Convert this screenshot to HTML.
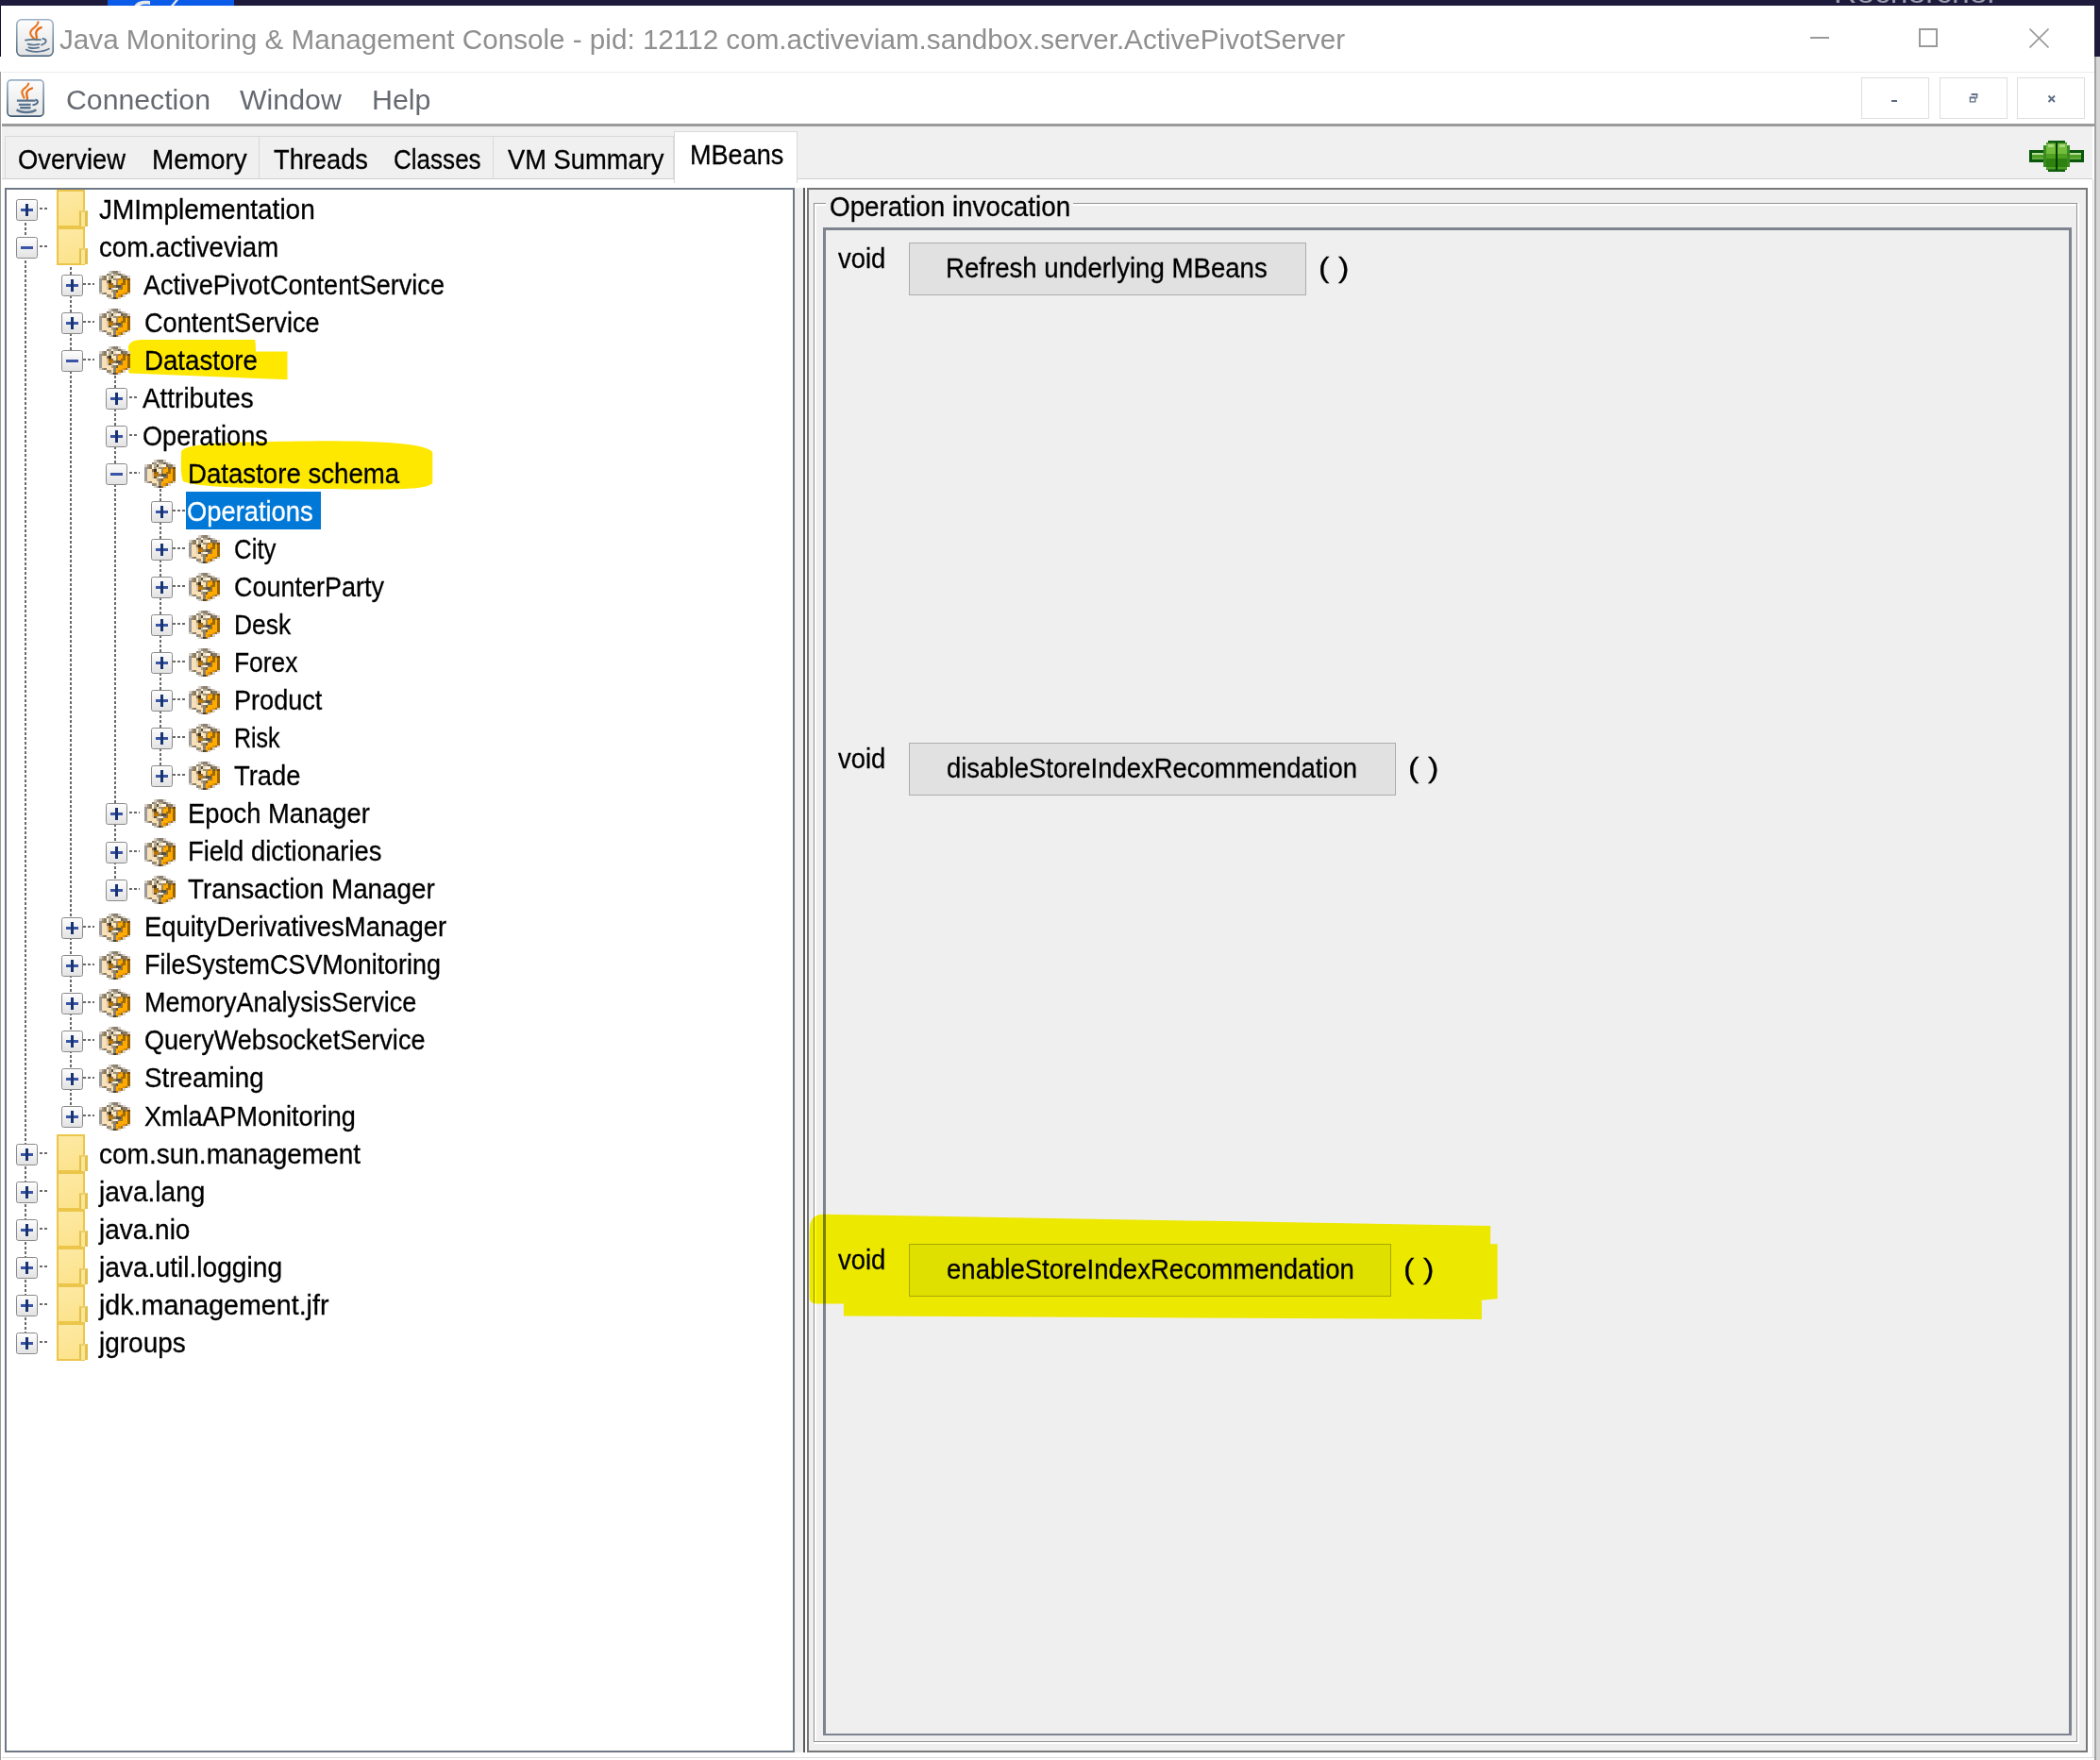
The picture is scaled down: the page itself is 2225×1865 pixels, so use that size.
<!DOCTYPE html><html><head><meta charset="utf-8"><title>JConsole</title><style>
*,*:before,*:after{margin:0;padding:0;box-sizing:border-box}
html,body{width:2225px;height:1865px;overflow:hidden;background:#fff}
body{position:relative;font-family:"Liberation Sans",sans-serif}
.a{position:absolute}
.t{position:absolute;font-family:"Liberation Sans",sans-serif;line-height:32px;white-space:pre;transform-origin:0 0;-webkit-text-stroke:0.3px currentColor}
.box{position:absolute;width:23px;height:23px;border:1px solid #8a8a8a;border-radius:2.5px;background:linear-gradient(#fdfdfd,#e3e3e3)}
.box:before{content:'';position:absolute;left:3.9px;top:9px;width:13px;height:3px;background:#3a55a5}
.box.p:after{content:'';position:absolute;left:8.9px;top:4px;width:3px;height:13px;background:#183470}
.vd{position:absolute;width:2px;background:repeating-linear-gradient(#6a6a6a 0 2.7px,transparent 2.7px 5px)}
.hd{position:absolute;height:2px;background:repeating-linear-gradient(90deg,#6a6a6a 0 3px,transparent 3px 5px)}
.fold{position:absolute;width:30px;height:40px;border:2.8px solid #ebc64b;border-right-width:2px;border-bottom-width:2px;background:linear-gradient(160deg,#fde9a4,#fce28a)}
.fold:after{content:'';position:absolute;left:22.4px;top:20.3px;width:8.7px;height:16.9px;border-left:2px solid #e3c04a;border-top:2.6px solid #ecd070;border-right:3px solid #e3c04a;background:#fbe697}
.bean{position:absolute;width:33px;height:30px}
</style></head><body>
<div class="a" style="left:0;top:0;width:2225px;height:6px;background:#1d1a3b"></div>
<div class="a" style="left:114px;top:0;width:134px;height:6px;background:#0a5ce8"></div>
<svg class="a" style="left:140px;top:0" width="50" height="6"><path d="M2 7 C4 2,10 0,19 1 L19 5 C14 4,9 5,7 7 Z" fill="#e8e8e8"/><path d="M41 6 L46 0 L49 0 L44 6 Z" fill="#e8e8e8"/></svg>
<div class="a" style="left:2219px;top:0;width:6px;height:60px;background:#1d1a3b"></div>
<div class="a" style="left:1900px;top:0;width:319px;height:6px;overflow:hidden"><div class="t" style="left:43px;top:-23px;font-size:30px;color:#9a9aac;transform:scaleX(1.12);-webkit-text-stroke:0">Rechercher</div></div>
<div class="a" style="left:0;top:6px;width:1px;height:54px;background:#120a30"></div>
<div class="a" style="left:0;top:76px;width:1px;height:1789px;background:#9a9a9a"></div>
<div class="a" style="left:2219px;top:60px;width:2px;height:1805px;background:#a3a3a3"></div>
<div class="a" style="left:2221px;top:60px;width:4px;height:1805px;background:#d6d6d6"></div>
<div class="a" style="left:17px;top:20px;width:40px;height:40px"><svg width="40" height="40" viewBox="0 0 40 40"><defs><linearGradient id="jg" x1="0" y1="0" x2="0" y2="1"><stop offset="0" stop-color="#fdfdfd"/><stop offset="1" stop-color="#e4e4e4"/></linearGradient><linearGradient id="jb" x1="0" y1="0" x2="0" y2="1"><stop offset="0" stop-color="#9ab0c6"/><stop offset="1" stop-color="#3e5a74"/></linearGradient></defs>
<rect x="0.8" y="0.8" width="38.4" height="38.4" rx="5" fill="url(#jg)" stroke="url(#jb)" stroke-width="1.4"/>
<path d="M23.4 3.4 C23.5 7,19 9,16.5 11.8 C13.8 15,15.5 18,19 20.8" fill="none" stroke="#e87722" stroke-width="2.2" stroke-linecap="round"/>
<path d="M26.8 9.1 C24 10,21.6 12,21.2 14.8 C21 17.5,22.8 19.2,21.4 22" fill="none" stroke="#e8650a" stroke-width="2.2" stroke-linecap="round"/>
<path d="M10 22.6 C14 21.5,21 21.8,26 22.2 M12.5 26.7 C16 27.8,21 27.6,24.5 26.8 M13.6 30.3 C16.5 31.3,21 31.2,24 30.4 M10.8 32.6 C16 35.8,28 35.6,34.8 31.8 M28.4 21 C33.5 21.5,32.5 26,27 27.6" fill="none" stroke="#5a7590" stroke-width="1.8" stroke-linecap="round"/>
</svg></div>
<div class="t" style="left:62.70px;top:25.70px;font-size:30px;color:#8f8f8f;transform:scaleX(0.9881);-webkit-text-stroke:0;">Java Monitoring &amp; Management Console - pid: 12112 com.activeviam.sandbox.server.ActivePivotServer</div>
<div class="a" style="left:1918px;top:39px;width:20px;height:2px;background:#9a9a9a"></div>
<div class="a" style="left:2033px;top:30px;width:20px;height:20px;border:2px solid #9a9a9a"></div>
<svg class="a" style="left:2150px;top:30px" width="21" height="21"><path d="M0.5 0.5 L20.5 20.5 M20.5 0.5 L0.5 20.5" stroke="#9a9a9a" stroke-width="1.6"/></svg>
<div class="a" style="left:2px;top:76px;width:2217px;height:1px;background:#ececec"></div>
<div class="a" style="left:7px;top:84px;width:40px;height:40px"><svg width="40" height="40" viewBox="0 0 40 40"><defs><linearGradient id="mg" x1="0" y1="0" x2="0" y2="1"><stop offset="0" stop-color="#fdfdfd"/><stop offset="1" stop-color="#e6e6e6"/></linearGradient><linearGradient id="mb" x1="0" y1="0" x2="0" y2="1"><stop offset="0" stop-color="#9ab0c6"/><stop offset="1" stop-color="#3e5a74"/></linearGradient></defs>
<rect x="0.9" y="0.9" width="38.2" height="38.2" rx="4" fill="url(#mg)" stroke="url(#mb)" stroke-width="1.6"/>
<path d="M23.2 4.6 C22.5 9,16 10,16.3 13.6 C16.5 16.5,18 18,18.5 19.6" fill="none" stroke="#e8761e" stroke-width="2.2" stroke-linecap="round"/>
<path d="M27 9.5 C24 10.5,21 12.5,21.2 15.5 C21.4 18,22.5 20,21.8 21.8" fill="none" stroke="#e8650a" stroke-width="2.2" stroke-linecap="round"/>
<path d="M10.9 22.6 L30.5 22.6 M12.8 26.9 L25.6 26.9 M14.2 30.3 L25.5 30.3 M10.6 32.3 C15 35.8,27 35.8,31.3 32.3" fill="none" stroke="#5a7590" stroke-width="2.4"/>
<path d="M30.5 21.8 C34 21.8,34.3 26.8,27.5 27.3" fill="none" stroke="#4e6a86" stroke-width="2"/>
</svg></div>
<div class="t" style="left:69.98px;top:90.38px;font-size:29.5px;color:#666a70;transform:scaleX(1.0250);-webkit-text-stroke:0;">Connection</div>
<div class="t" style="left:254.00px;top:90.38px;font-size:29.5px;color:#666a70;transform:scaleX(1.0273);-webkit-text-stroke:0;">Window</div>
<div class="t" style="left:393.94px;top:90.38px;font-size:29.5px;color:#666a70;transform:scaleX(1.0298);-webkit-text-stroke:0;">Help</div>
<div class="a" style="left:1972px;top:82px;width:72px;height:44px;border:1px solid #dedede;background:#fff"></div>
<div class="a" style="left:2055px;top:82px;width:72px;height:44px;border:1px solid #dedede;background:#fff"></div>
<div class="a" style="left:2137px;top:82px;width:72px;height:44px;border:1px solid #dedede;background:#fff"></div>
<div class="a" style="left:2004px;top:106px;width:6px;height:2px;background:#5a6a80"></div>
<svg class="a" style="left:2086px;top:99px" width="10" height="10"><path d="M3 1h5.6v4.2" fill="none" stroke="#5f6f84" stroke-width="1.4"/><rect x="2.6" y="0.2" width="6.7" height="1.8" fill="#5f6f84"/><path d="M1.4 4.4h5.4v4.5H1.4z" fill="none" stroke="#5f6f84" stroke-width="1.3"/><rect x="0.8" y="3.6" width="6.6" height="1.8" fill="#5f6f84"/></svg>
<svg class="a" style="left:2169px;top:100px" width="10" height="10"><path d="M1.5 1.5L8 8M8 1.5L1.5 8" stroke="#5f6f84" stroke-width="1.9"/></svg>
<div class="a" style="left:2px;top:131px;width:2217px;height:3px;background:#9b9b9b"></div>
<div class="a" style="left:2px;top:134px;width:2215px;height:56px;background:#f0f0f0"></div>
<div class="a" style="left:5px;top:144px;width:709px;height:46px;border:1px solid #d9d9d9;border-bottom:none;background:#f0f0f0"></div>
<div class="a" style="left:274px;top:145px;width:1px;height:44px;background:#d9d9d9"></div>
<div class="a" style="left:522px;top:145px;width:1px;height:44px;background:#d9d9d9"></div>
<div class="a" style="left:2px;top:189px;width:2215px;height:1px;background:#d0d0d0"></div>
<div class="a" style="left:714px;top:139px;width:131px;height:55px;border:1px solid #d9d9d9;border-bottom:none;background:#fff"></div>
<div class="t" style="left:19.47px;top:152.68px;font-size:29.5px;color:#000;transform:scaleX(0.9263);">Overview</div>
<div class="t" style="left:160.91px;top:152.68px;font-size:29.5px;color:#000;transform:scaleX(0.9448);">Memory</div>
<div class="t" style="left:289.70px;top:152.68px;font-size:29.5px;color:#000;transform:scaleX(0.9231);">Threads</div>
<div class="t" style="left:417.02px;top:152.68px;font-size:29.5px;color:#000;transform:scaleX(0.8830);">Classes</div>
<div class="t" style="left:538.00px;top:152.68px;font-size:29.5px;color:#000;transform:scaleX(0.9256);">VM Summary</div>
<div class="t" style="left:731.16px;top:147.78px;font-size:29.5px;color:#000;transform:scaleX(0.9178);">MBeans</div>
<svg class="a" style="left:2150px;top:149px" width="58" height="33" viewBox="0 0 58 33" shape-rendering="crispEdges">
<rect x="0" y="10" width="58" height="13" fill="#0a560a"/>
<rect x="3" y="13" width="52" height="7" fill="#4e9e22"/>
<rect x="3" y="13" width="52" height="2" fill="#b4dc9c"/><rect x="3" y="18" width="52" height="2" fill="#62aa44"/>
<rect x="20" y="0" width="18" height="33" fill="#0e5e0e"/>
<rect x="18" y="2" width="22" height="29" fill="#2f7a1c"/>
<rect x="15" y="5" width="28" height="23" fill="#3a8a22"/>
<rect x="18" y="3" width="22" height="27" fill="#4da020"/>
<rect x="18" y="3" width="22" height="11" fill="#74bc3c"/>
<rect x="18" y="19" width="22" height="9" fill="#2e8010"/>
<rect x="20" y="4" width="6" height="3" fill="#a8d880"/><rect x="32" y="4" width="6" height="3" fill="#a8d880"/>
<rect x="28" y="2" width="2" height="29" fill="#003e00"/>
</svg>
<div class="a" style="left:5px;top:199px;width:837px;height:1658px;border:2px solid #6f7885;background:#fff"></div>
<div class="a" style="left:842px;top:199px;width:9px;height:1658px;background:#efefef"></div>
<div class="a" style="left:851px;top:199px;width:2px;height:1658px;background:#5a5a5a"></div>
<div class="a" style="left:855px;top:199px;width:1357px;height:1658px;border:2px solid #777;background:#efefef"></div>
<div class="a" style="left:862px;top:215px;width:1339px;height:1631px;border:1px solid #939393;"></div>
<div class="a" style="left:863px;top:216px;width:1337px;height:1629px;border:2px solid #fff;border-right:none;border-bottom:none"></div>
<div class="a" style="left:863px;top:1846px;width:1339px;height:2px;background:#fff"></div>
<div class="a" style="left:2201px;top:216px;width:2px;height:1632px;background:#fff"></div>
<div class="a" style="left:875px;top:205px;width:262px;height:18px;background:#efefef"></div>
<div class="t" style="left:879.46px;top:202.78px;font-size:29.5px;color:#000;transform:scaleX(0.9430);">Operation invocation</div>
<div class="a" style="left:872px;top:241px;width:1323px;height:1598px;border:3px solid #7d838f;border-bottom-width:2px;background:#efefef"></div>
<div class="a" style="left:2202px;top:199px;width:1px;height:1px"></div>
<svg class="a" style="left:850px;top:1280px;mix-blend-mode:multiply" width="750" height="125"><path d="M7.8 96 C7.6 60,7.4 30,8 20 C9 10,14 6.7,23 6.7 L729.2 19 L729.2 38.3 L736.6 38.3 L736.6 96.3 L719.9 97.7 L719.9 118 L43.9 114.4 L43.9 101.4 L14 101.4 C10 101,8 99,7.8 96 Z" fill="#fdf800"/></svg>
<div class="t" style="left:888.00px;top:257.58px;font-size:29.5px;color:#000;transform:scaleX(0.9296);">void</div>
<div class="a" style="left:963px;top:257px;width:421px;height:56px;border:1px solid #adadad;background:#e1e1e1"></div>
<div class="t" style="left:1001.63px;top:267.78px;font-size:29.5px;color:#000;transform:scaleX(0.9361);">Refresh underlying MBeans</div>
<div class="t" style="left:1397.44px;top:267.78px;font-size:29.5px;color:#000;transform:scaleX(1.1591);">( )</div>
<div class="t" style="left:888.00px;top:787.58px;font-size:29.5px;color:#000;transform:scaleX(0.9296);">void</div>
<div class="a" style="left:963px;top:787px;width:516px;height:56px;border:1px solid #adadad;background:#e1e1e1"></div>
<div class="t" style="left:1002.57px;top:797.78px;font-size:29.5px;color:#000;transform:scaleX(0.9306);">disableStoreIndexRecommendation</div>
<div class="t" style="left:1491.84px;top:797.78px;font-size:29.5px;color:#000;transform:scaleX(1.1591);">( )</div>
<div class="t" style="left:888.00px;top:1318.58px;font-size:29.5px;color:#000;transform:scaleX(0.9296);">void</div>
<div class="a" style="left:963px;top:1318px;width:511px;height:56px;border:1px solid #a8a800;background:#dfe000"></div>
<div class="t" style="left:1002.57px;top:1328.78px;font-size:29.5px;color:#000;transform:scaleX(0.9338);">enableStoreIndexRecommendation</div>
<div class="t" style="left:1486.84px;top:1328.78px;font-size:29.5px;color:#000;transform:scaleX(1.1591);">( )</div>
<div class="a" style="left:2px;top:1862px;width:2217px;height:1px;background:#dcdcdc"></div>
<div class="a" style="left:2217px;top:190px;width:1px;height:1673px;background:#dcdcdc"></div>
<svg width="0" height="0" style="position:absolute"><defs><symbol id="bean" viewBox="0 0 13 12"><rect x="4" y="0" width="1.02" height="1.02" fill="#d8d0c8"/><rect x="5" y="0" width="1.02" height="1.02" fill="#a09888"/><rect x="6" y="0" width="1.02" height="1.02" fill="#8a8070"/><rect x="7" y="0" width="1.02" height="1.02" fill="#8a8070"/><rect x="8" y="0" width="1.02" height="1.02" fill="#d8d0c8"/><rect x="3" y="1" width="1.02" height="1.02" fill="#8a7a60"/><rect x="4" y="1" width="1.02" height="1.02" fill="#a09888"/><rect x="5" y="1" width="1.02" height="1.02" fill="#fff3dc"/><rect x="6" y="1" width="1.02" height="1.02" fill="#b0a898"/><rect x="7" y="1" width="1.02" height="1.02" fill="#a89880"/><rect x="8" y="1" width="1.02" height="1.02" fill="#70685a"/><rect x="9" y="1" width="1.02" height="1.02" fill="#a09888"/><rect x="10" y="1" width="1.02" height="1.02" fill="#d8d0c8"/><rect x="0" y="2" width="1.02" height="1.02" fill="#d8d0c8"/><rect x="1" y="2" width="1.02" height="1.02" fill="#a09888"/><rect x="2" y="2" width="1.02" height="1.02" fill="#8a7a60"/><rect x="3" y="2" width="1.02" height="1.02" fill="#fff3dc"/><rect x="4" y="2" width="1.02" height="1.02" fill="#b8ad98"/><rect x="5" y="2" width="1.02" height="1.02" fill="#5a5040"/><rect x="6" y="2" width="1.02" height="1.02" fill="#e8dcc0"/><rect x="7" y="2" width="1.02" height="1.02" fill="#fff3dc"/><rect x="8" y="2" width="1.02" height="1.02" fill="#fff3dc"/><rect x="9" y="2" width="1.02" height="1.02" fill="#6a6050"/><rect x="10" y="2" width="1.02" height="1.02" fill="#8a7a60"/><rect x="11" y="2" width="1.02" height="1.02" fill="#8a7a60"/><rect x="12" y="2" width="1.02" height="1.02" fill="#d8d0c8"/><rect x="0" y="3" width="1.02" height="1.02" fill="#9a9a9a"/><rect x="1" y="3" width="1.02" height="1.02" fill="#a08a60"/><rect x="2" y="3" width="1.02" height="1.02" fill="#8a7a60"/><rect x="3" y="3" width="1.02" height="1.02" fill="#fff3dc"/><rect x="4" y="3" width="1.02" height="1.02" fill="#a09880"/><rect x="5" y="3" width="1.02" height="1.02" fill="#f0dcb0"/><rect x="6" y="3" width="1.02" height="1.02" fill="#a09078"/><rect x="7" y="3" width="1.02" height="1.02" fill="#9a9080"/><rect x="8" y="3" width="1.02" height="1.02" fill="#c08020"/><rect x="9" y="3" width="1.02" height="1.02" fill="#f0a000"/><rect x="10" y="3" width="1.02" height="1.02" fill="#7a6030"/><rect x="11" y="3" width="1.02" height="1.02" fill="#a08040"/><rect x="12" y="3" width="1.02" height="1.02" fill="#7a4800"/><rect x="0" y="4" width="1.02" height="1.02" fill="#9a9a9a"/><rect x="1" y="4" width="1.02" height="1.02" fill="#f8e0b8"/><rect x="2" y="4" width="1.02" height="1.02" fill="#f8e0b8"/><rect x="3" y="4" width="1.02" height="1.02" fill="#8a7050"/><rect x="4" y="4" width="1.02" height="1.02" fill="#3a3020"/><rect x="5" y="4" width="1.02" height="1.02" fill="#fde8c0"/><rect x="6" y="4" width="1.02" height="1.02" fill="#fde8c0"/><rect x="7" y="4" width="1.02" height="1.02" fill="#a08858"/><rect x="8" y="4" width="1.02" height="1.02" fill="#ffaa00"/><rect x="9" y="4" width="1.02" height="1.02" fill="#ffaa00"/><rect x="10" y="4" width="1.02" height="1.02" fill="#9a6800"/><rect x="11" y="4" width="1.02" height="1.02" fill="#ffaa00"/><rect x="12" y="4" width="1.02" height="1.02" fill="#a06800"/><rect x="0" y="5" width="1.02" height="1.02" fill="#9a9a9a"/><rect x="1" y="5" width="1.02" height="1.02" fill="#f8e0b8"/><rect x="2" y="5" width="1.02" height="1.02" fill="#f8e0b8"/><rect x="3" y="5" width="1.02" height="1.02" fill="#d0c0a0"/><rect x="4" y="5" width="1.02" height="1.02" fill="#9a6000"/><rect x="5" y="5" width="1.02" height="1.02" fill="#8a7040"/><rect x="6" y="5" width="1.02" height="1.02" fill="#f8dcb0"/><rect x="7" y="5" width="1.02" height="1.02" fill="#a08858"/><rect x="8" y="5" width="1.02" height="1.02" fill="#ffaa00"/><rect x="9" y="5" width="1.02" height="1.02" fill="#a06c00"/><rect x="10" y="5" width="1.02" height="1.02" fill="#a06c00"/><rect x="11" y="5" width="1.02" height="1.02" fill="#ffaa00"/><rect x="12" y="5" width="1.02" height="1.02" fill="#9a6400"/><rect x="0" y="6" width="1.02" height="1.02" fill="#9a9a9a"/><rect x="1" y="6" width="1.02" height="1.02" fill="#f8e0b8"/><rect x="2" y="6" width="1.02" height="1.02" fill="#f8e0b8"/><rect x="3" y="6" width="1.02" height="1.02" fill="#d8c8a8"/><rect x="4" y="6" width="1.02" height="1.02" fill="#c07800"/><rect x="5" y="6" width="1.02" height="1.02" fill="#c07800"/><rect x="6" y="6" width="1.02" height="1.02" fill="#8a7a60"/><rect x="7" y="6" width="1.02" height="1.02" fill="#5a5040"/><rect x="8" y="6" width="1.02" height="1.02" fill="#5a5040"/><rect x="9" y="6" width="1.02" height="1.02" fill="#8a7040"/><rect x="10" y="6" width="1.02" height="1.02" fill="#ffaa00"/><rect x="11" y="6" width="1.02" height="1.02" fill="#ffaa00"/><rect x="12" y="6" width="1.02" height="1.02" fill="#9a6400"/><rect x="0" y="7" width="1.02" height="1.02" fill="#9a9a9a"/><rect x="1" y="7" width="1.02" height="1.02" fill="#f8e0b8"/><rect x="2" y="7" width="1.02" height="1.02" fill="#f8e0b8"/><rect x="3" y="7" width="1.02" height="1.02" fill="#d8c8a8"/><rect x="4" y="7" width="1.02" height="1.02" fill="#6a5030"/><rect x="5" y="7" width="1.02" height="1.02" fill="#c8c8c0"/><rect x="6" y="7" width="1.02" height="1.02" fill="#fff3dc"/><rect x="7" y="7" width="1.02" height="1.02" fill="#fff3dc"/><rect x="8" y="7" width="1.02" height="1.02" fill="#7a7a78"/><rect x="9" y="7" width="1.02" height="1.02" fill="#b07000"/><rect x="10" y="7" width="1.02" height="1.02" fill="#ffaa00"/><rect x="11" y="7" width="1.02" height="1.02" fill="#ffaa00"/><rect x="12" y="7" width="1.02" height="1.02" fill="#9a6400"/><rect x="0" y="8" width="1.02" height="1.02" fill="#9a9a9a"/><rect x="1" y="8" width="1.02" height="1.02" fill="#f8e0b8"/><rect x="2" y="8" width="1.02" height="1.02" fill="#f8e0b8"/><rect x="3" y="8" width="1.02" height="1.02" fill="#f8e0b8"/><rect x="4" y="8" width="1.02" height="1.02" fill="#f8e0b8"/><rect x="5" y="8" width="1.02" height="1.02" fill="#b8a078"/><rect x="6" y="8" width="1.02" height="1.02" fill="#8a8070"/><rect x="7" y="8" width="1.02" height="1.02" fill="#7a6030"/><rect x="8" y="8" width="1.02" height="1.02" fill="#ffaa00"/><rect x="9" y="8" width="1.02" height="1.02" fill="#ffaa00"/><rect x="10" y="8" width="1.02" height="1.02" fill="#ffaa00"/><rect x="11" y="8" width="1.02" height="1.02" fill="#ffaa00"/><rect x="12" y="8" width="1.02" height="1.02" fill="#9a6400"/><rect x="0" y="9" width="1.02" height="1.02" fill="#d8d0c8"/><rect x="1" y="9" width="1.02" height="1.02" fill="#a09888"/><rect x="2" y="9" width="1.02" height="1.02" fill="#8a7a60"/><rect x="3" y="9" width="1.02" height="1.02" fill="#f8e0b8"/><rect x="4" y="9" width="1.02" height="1.02" fill="#f8e0b8"/><rect x="5" y="9" width="1.02" height="1.02" fill="#f8e0b8"/><rect x="6" y="9" width="1.02" height="1.02" fill="#8a8070"/><rect x="7" y="9" width="1.02" height="1.02" fill="#ffaa00"/><rect x="8" y="9" width="1.02" height="1.02" fill="#ffaa00"/><rect x="9" y="9" width="1.02" height="1.02" fill="#ffaa00"/><rect x="10" y="9" width="1.02" height="1.02" fill="#e09000"/><rect x="11" y="9" width="1.02" height="1.02" fill="#a07020"/><rect x="12" y="9" width="1.02" height="1.02" fill="#d8d0c8"/><rect x="3" y="10" width="1.02" height="1.02" fill="#8a8a88"/><rect x="4" y="10" width="1.02" height="1.02" fill="#a09070"/><rect x="5" y="10" width="1.02" height="1.02" fill="#f8e0b8"/><rect x="6" y="10" width="1.02" height="1.02" fill="#8a8070"/><rect x="7" y="10" width="1.02" height="1.02" fill="#ffaa00"/><rect x="8" y="10" width="1.02" height="1.02" fill="#e09000"/><rect x="9" y="10" width="1.02" height="1.02" fill="#a07020"/><rect x="10" y="10" width="1.02" height="1.02" fill="#d8d0c8"/><rect x="4" y="11" width="1.02" height="1.02" fill="#d8d0c8"/><rect x="5" y="11" width="1.02" height="1.02" fill="#a0a098"/><rect x="6" y="11" width="1.02" height="1.02" fill="#4a4030"/><rect x="7" y="11" width="1.02" height="1.02" fill="#a07020"/><rect x="8" y="11" width="1.02" height="1.02" fill="#d8d0c8"/></symbol></defs></svg>
<div class="vd" style="left:26px;top:236px;height:1186px"></div>
<div class="vd" style="left:74px;top:283px;height:899px"></div>
<div class="vd" style="left:121px;top:398px;height:544px"></div>
<div class="vd" style="left:169px;top:518px;height:304px"></div>
<svg class="a" style="left:130px;top:355px" width="180" height="52"><path d="M6 12 C8 6,14 5,23 5 L140 5 C141 8,141 14,141 17.6 L174.5 17.6 L174.5 47.3 L7 40.4 C5 38,6 30,6 12 Z" fill="#ffe800"/></svg>
<svg class="a" style="left:188px;top:462px" width="275" height="62"><path d="M4 17 C6 9,40 6,140 5.4 C220 5,262 8,270.3 17 L270.3 50 C262 57,240 57,140 56 C60 55,20 54,6 48 C3 40,4 30,4 17 Z" fill="#ffe800"/></svg>
<div class="a" style="left:197px;top:521px;width:143px;height:40px;background:#0078d7"></div>
<div class="hd" style="left:42px;top:220.00px;width:8px"></div>
<div class="box p" style="left:17px;top:211.00px"></div>
<div class="fold" style="left:60px;top:201.00px"></div>
<div class="t" style="left:104.80px;top:205.78px;font-size:29.5px;color:#000;transform:scaleX(0.9491);">JMImplementation</div>
<div class="hd" style="left:42px;top:260.03px;width:8px"></div>
<div class="box m" style="left:17px;top:251.03px"></div>
<div class="fold" style="left:60px;top:241.03px"></div>
<div class="t" style="left:104.96px;top:245.81px;font-size:29.5px;color:#000;transform:scaleX(0.9357);">com.activeviam</div>
<div class="hd" style="left:88px;top:300.06px;width:12px"></div>
<div class="box p" style="left:65px;top:291.06px"></div>
<svg class="bean" style="left:105px;top:287.06px" viewBox="0 0 13 12" preserveAspectRatio="none" shape-rendering="crispEdges"><use href="#bean"/></svg>
<div class="t" style="left:152.30px;top:285.84px;font-size:29.5px;color:#000;transform:scaleX(0.9176);">ActivePivotContentService</div>
<div class="hd" style="left:88px;top:340.09px;width:12px"></div>
<div class="box p" style="left:65px;top:331.09px"></div>
<svg class="bean" style="left:105px;top:327.09px" viewBox="0 0 13 12" preserveAspectRatio="none" shape-rendering="crispEdges"><use href="#bean"/></svg>
<div class="t" style="left:152.58px;top:325.87px;font-size:29.5px;color:#000;transform:scaleX(0.9202);">ContentService</div>
<div class="hd" style="left:88px;top:380.12px;width:12px"></div>
<div class="box m" style="left:65px;top:371.12px"></div>
<svg class="bean" style="left:105px;top:367.12px" viewBox="0 0 13 12" preserveAspectRatio="none" shape-rendering="crispEdges"><use href="#bean"/></svg>
<div class="t" style="left:152.53px;top:365.90px;font-size:29.5px;color:#000;transform:scaleX(0.9371);">Datastore</div>
<div class="hd" style="left:137px;top:420.15px;width:8px"></div>
<div class="box p" style="left:112px;top:411.15px"></div>
<div class="t" style="left:150.80px;top:405.93px;font-size:29.5px;color:#000;transform:scaleX(0.9454);">Attributes</div>
<div class="hd" style="left:137px;top:460.18px;width:8px"></div>
<div class="box p" style="left:112px;top:451.18px"></div>
<div class="t" style="left:151.08px;top:445.96px;font-size:29.5px;color:#000;transform:scaleX(0.9204);">Operations</div>
<div class="hd" style="left:137px;top:500.21px;width:11px"></div>
<div class="box m" style="left:112px;top:491.21px"></div>
<svg class="bean" style="left:153px;top:487.21px" viewBox="0 0 13 12" preserveAspectRatio="none" shape-rendering="crispEdges"><use href="#bean"/></svg>
<div class="t" style="left:198.63px;top:485.99px;font-size:29.5px;color:#000;transform:scaleX(0.9362);">Datastore schema</div>
<div class="hd" style="left:183px;top:540.24px;width:13px"></div>
<div class="box p" style="left:160px;top:531.24px"></div>
<div class="t" style="left:198.07px;top:526.02px;font-size:29.5px;color:#fff;transform:scaleX(0.9260);">Operations</div>
<div class="hd" style="left:183px;top:580.27px;width:13px"></div>
<div class="box p" style="left:160px;top:571.27px"></div>
<svg class="bean" style="left:200px;top:567.27px" viewBox="0 0 13 12" preserveAspectRatio="none" shape-rendering="crispEdges"><use href="#bean"/></svg>
<div class="t" style="left:247.92px;top:566.05px;font-size:29.5px;color:#000;transform:scaleX(0.8751);">City</div>
<div class="hd" style="left:183px;top:620.30px;width:13px"></div>
<div class="box p" style="left:160px;top:611.30px"></div>
<svg class="bean" style="left:200px;top:607.30px" viewBox="0 0 13 12" preserveAspectRatio="none" shape-rendering="crispEdges"><use href="#bean"/></svg>
<div class="t" style="left:247.89px;top:606.08px;font-size:29.5px;color:#000;transform:scaleX(0.9142);">CounterParty</div>
<div class="hd" style="left:183px;top:660.33px;width:13px"></div>
<div class="box p" style="left:160px;top:651.33px"></div>
<svg class="bean" style="left:200px;top:647.33px" viewBox="0 0 13 12" preserveAspectRatio="none" shape-rendering="crispEdges"><use href="#bean"/></svg>
<div class="t" style="left:247.91px;top:646.11px;font-size:29.5px;color:#000;transform:scaleX(0.8937);">Desk</div>
<div class="hd" style="left:183px;top:700.36px;width:13px"></div>
<div class="box p" style="left:160px;top:691.36px"></div>
<svg class="bean" style="left:200px;top:687.36px" viewBox="0 0 13 12" preserveAspectRatio="none" shape-rendering="crispEdges"><use href="#bean"/></svg>
<div class="t" style="left:247.91px;top:686.14px;font-size:29.5px;color:#000;transform:scaleX(0.8947);">Forex</div>
<div class="hd" style="left:183px;top:740.39px;width:13px"></div>
<div class="box p" style="left:160px;top:731.39px"></div>
<svg class="bean" style="left:200px;top:727.39px" viewBox="0 0 13 12" preserveAspectRatio="none" shape-rendering="crispEdges"><use href="#bean"/></svg>
<div class="t" style="left:247.86px;top:726.17px;font-size:29.5px;color:#000;transform:scaleX(0.9179);">Product</div>
<div class="hd" style="left:183px;top:780.42px;width:13px"></div>
<div class="box p" style="left:160px;top:771.42px"></div>
<svg class="bean" style="left:200px;top:767.42px" viewBox="0 0 13 12" preserveAspectRatio="none" shape-rendering="crispEdges"><use href="#bean"/></svg>
<div class="t" style="left:248.01px;top:766.20px;font-size:29.5px;color:#000;transform:scaleX(0.8470);">Risk</div>
<div class="hd" style="left:183px;top:820.45px;width:13px"></div>
<div class="box p" style="left:160px;top:811.45px"></div>
<svg class="bean" style="left:200px;top:807.45px" viewBox="0 0 13 12" preserveAspectRatio="none" shape-rendering="crispEdges"><use href="#bean"/></svg>
<div class="t" style="left:247.70px;top:806.23px;font-size:29.5px;color:#000;transform:scaleX(0.9277);">Trade</div>
<div class="hd" style="left:137px;top:860.48px;width:11px"></div>
<div class="box p" style="left:112px;top:851.48px"></div>
<svg class="bean" style="left:153px;top:847.48px" viewBox="0 0 13 12" preserveAspectRatio="none" shape-rendering="crispEdges"><use href="#bean"/></svg>
<div class="t" style="left:198.65px;top:846.26px;font-size:29.5px;color:#000;transform:scaleX(0.9257);">Epoch Manager</div>
<div class="hd" style="left:137px;top:900.51px;width:11px"></div>
<div class="box p" style="left:112px;top:891.51px"></div>
<svg class="bean" style="left:153px;top:887.51px" viewBox="0 0 13 12" preserveAspectRatio="none" shape-rendering="crispEdges"><use href="#bean"/></svg>
<div class="t" style="left:198.64px;top:886.29px;font-size:29.5px;color:#000;transform:scaleX(0.9282);">Field dictionaries</div>
<div class="hd" style="left:137px;top:940.54px;width:11px"></div>
<div class="box p" style="left:112px;top:931.54px"></div>
<svg class="bean" style="left:153px;top:927.54px" viewBox="0 0 13 12" preserveAspectRatio="none" shape-rendering="crispEdges"><use href="#bean"/></svg>
<div class="t" style="left:198.50px;top:926.32px;font-size:29.5px;color:#000;transform:scaleX(0.9427);">Transaction Manager</div>
<div class="hd" style="left:88px;top:980.57px;width:12px"></div>
<div class="box p" style="left:65px;top:971.57px"></div>
<svg class="bean" style="left:105px;top:967.57px" viewBox="0 0 13 12" preserveAspectRatio="none" shape-rendering="crispEdges"><use href="#bean"/></svg>
<div class="t" style="left:152.54px;top:966.35px;font-size:29.5px;color:#000;transform:scaleX(0.9294);">EquityDerivativesManager</div>
<div class="hd" style="left:88px;top:1020.60px;width:12px"></div>
<div class="box p" style="left:65px;top:1011.60px"></div>
<svg class="bean" style="left:105px;top:1007.60px" viewBox="0 0 13 12" preserveAspectRatio="none" shape-rendering="crispEdges"><use href="#bean"/></svg>
<div class="t" style="left:152.58px;top:1006.38px;font-size:29.5px;color:#000;transform:scaleX(0.9118);">FileSystemCSVMonitoring</div>
<div class="hd" style="left:88px;top:1060.63px;width:12px"></div>
<div class="box p" style="left:65px;top:1051.63px"></div>
<svg class="bean" style="left:105px;top:1047.63px" viewBox="0 0 13 12" preserveAspectRatio="none" shape-rendering="crispEdges"><use href="#bean"/></svg>
<div class="t" style="left:152.57px;top:1046.41px;font-size:29.5px;color:#000;transform:scaleX(0.9157);">MemoryAnalysisService</div>
<div class="hd" style="left:88px;top:1100.66px;width:12px"></div>
<div class="box p" style="left:65px;top:1091.66px"></div>
<svg class="bean" style="left:105px;top:1087.66px" viewBox="0 0 13 12" preserveAspectRatio="none" shape-rendering="crispEdges"><use href="#bean"/></svg>
<div class="t" style="left:152.58px;top:1086.44px;font-size:29.5px;color:#000;transform:scaleX(0.9179);">QueryWebsocketService</div>
<div class="hd" style="left:88px;top:1140.69px;width:12px"></div>
<div class="box p" style="left:65px;top:1131.69px"></div>
<svg class="bean" style="left:105px;top:1127.69px" viewBox="0 0 13 12" preserveAspectRatio="none" shape-rendering="crispEdges"><use href="#bean"/></svg>
<div class="t" style="left:152.66px;top:1126.47px;font-size:29.5px;color:#000;transform:scaleX(0.9414);">Streaming</div>
<div class="hd" style="left:88px;top:1180.72px;width:12px"></div>
<div class="box p" style="left:65px;top:1171.72px"></div>
<svg class="bean" style="left:105px;top:1167.72px" viewBox="0 0 13 12" preserveAspectRatio="none" shape-rendering="crispEdges"><use href="#bean"/></svg>
<div class="t" style="left:152.60px;top:1166.50px;font-size:29.5px;color:#000;transform:scaleX(0.9156);">XmlaAPMonitoring</div>
<div class="hd" style="left:42px;top:1220.75px;width:8px"></div>
<div class="box p" style="left:17px;top:1211.75px"></div>
<div class="fold" style="left:60px;top:1201.75px"></div>
<div class="t" style="left:104.95px;top:1206.53px;font-size:29.5px;color:#000;transform:scaleX(0.9495);">com.sun.management</div>
<div class="hd" style="left:42px;top:1260.78px;width:8px"></div>
<div class="box p" style="left:17px;top:1251.78px"></div>
<div class="fold" style="left:60px;top:1241.78px"></div>
<div class="t" style="left:104.95px;top:1246.56px;font-size:29.5px;color:#000;transform:scaleX(0.9517);">java.lang</div>
<div class="hd" style="left:42px;top:1300.81px;width:8px"></div>
<div class="box p" style="left:17px;top:1291.81px"></div>
<div class="fold" style="left:60px;top:1281.81px"></div>
<div class="t" style="left:104.95px;top:1286.59px;font-size:29.5px;color:#000;transform:scaleX(0.9484);">java.nio</div>
<div class="hd" style="left:42px;top:1340.84px;width:8px"></div>
<div class="box p" style="left:17px;top:1331.84px"></div>
<div class="fold" style="left:60px;top:1321.84px"></div>
<div class="t" style="left:104.95px;top:1326.62px;font-size:29.5px;color:#000;transform:scaleX(0.9544);">java.util.logging</div>
<div class="hd" style="left:42px;top:1380.87px;width:8px"></div>
<div class="box p" style="left:17px;top:1371.87px"></div>
<div class="fold" style="left:60px;top:1361.87px"></div>
<div class="t" style="left:104.97px;top:1366.65px;font-size:29.5px;color:#000;transform:scaleX(0.9705);">jdk.management.jfr</div>
<div class="hd" style="left:42px;top:1420.90px;width:8px"></div>
<div class="box p" style="left:17px;top:1411.90px"></div>
<div class="fold" style="left:60px;top:1401.90px"></div>
<div class="t" style="left:104.95px;top:1406.68px;font-size:29.5px;color:#000;transform:scaleX(0.9484);">jgroups</div>
</body></html>
